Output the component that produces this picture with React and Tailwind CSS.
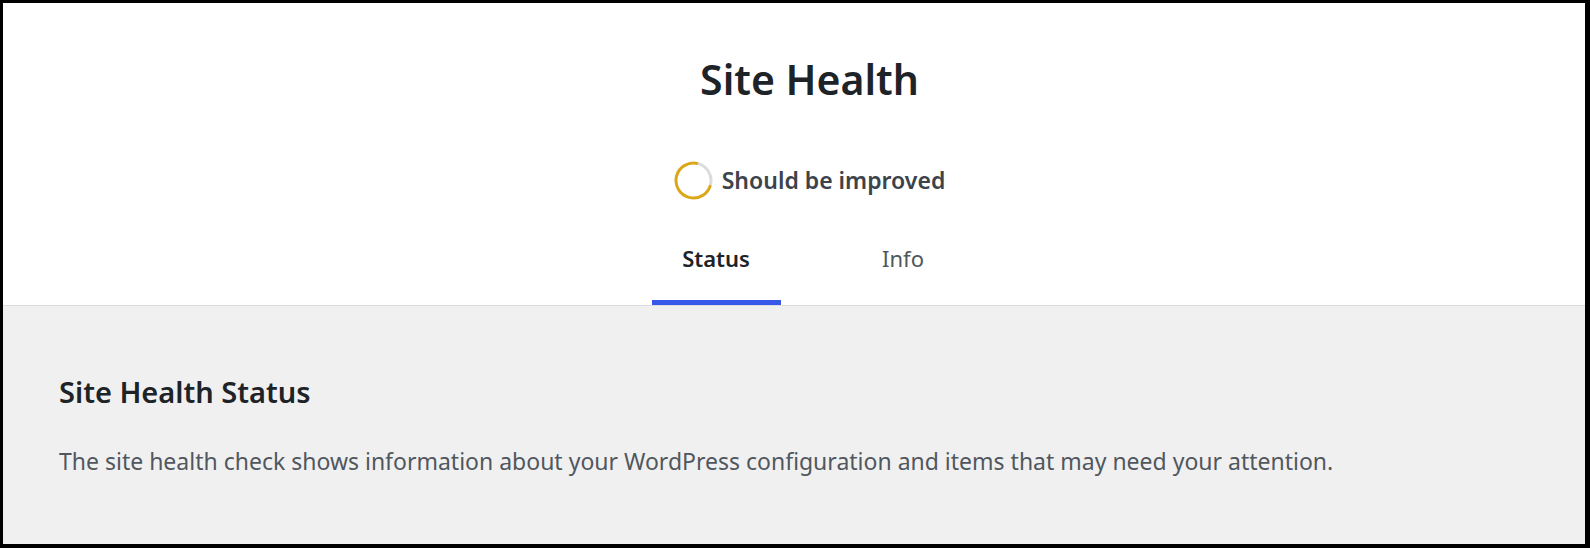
import React, { useState } from "react";

const FONT = { fontFamily: '"Noto Sans", "Open Sans", sans-serif' };

function ProgressRing() {
  return (
    <svg width="39" height="39" viewBox="0 0 39 39" className="shrink-0">
      <path
        d="M24.03 2.6 A17.5 17.5 0 0 1 36.4 24.03"
        fill="none"
        stroke="#dcdcde"
        strokeWidth="3"
      />
      <path
        d="M36.4 24.03 A17.5 17.5 0 1 1 24.03 2.6"
        fill="none"
        stroke="#dba617"
        strokeWidth="3"
      />
    </svg>
  );
}

export default function App() {
  const [tab, setTab] = useState("status");

  return (
    <div
      className="w-[1590px] h-[548px] border-black border-t-[3px] border-l-[3px] border-r-[5px] border-b-[4px] bg-[#f0f0f1] flex flex-col overflow-hidden"
      style={FONT}
    >
      <header className="bg-white border-b border-[#dcdcde] pl-[31px] pt-[48px] flex flex-col items-center">
        <h1 className="text-[41px] leading-[56px] font-semibold text-[#1d2327]">
          Site Health
        </h1>
        <div className="mt-[54px] flex items-center gap-[9px]">
          <ProgressRing />
          <span className="text-[23px] leading-[31px] font-semibold text-[#3c434a]">
            Should be improved
          </span>
        </div>
        <nav className="mt-[43px] flex gap-[58px]">
          <button
            onClick={() => setTab("status")}
            className={
              tab === "status"
                ? "w-[129px] text-center text-[22px] leading-[30px] pb-[27px] font-semibold text-[#1d2327] border-b-[5px] border-[#3858e9]"
                : "w-[129px] text-center text-[22px] leading-[30px] pb-[27px] text-[#50575e] border-b-[5px] border-transparent"
            }
          >
            Status
          </button>
          <button
            onClick={() => setTab("info")}
            className={
              tab === "info"
                ? "w-[129px] text-center text-[22px] leading-[30px] pb-[27px] font-semibold text-[#1d2327] border-b-[5px] border-[#3858e9]"
                : "w-[129px] text-center text-[22px] leading-[30px] pb-[27px] text-[#50575e] border-b-[5px] border-transparent"
            }
          >
            Info
          </button>
        </nav>
      </header>
      <section className="pl-[56px] pt-[66px]">
        <h2 className="text-[29px] leading-[40px] font-semibold text-[#1d2327]">
          Site Health Status
        </h2>
        <p className="mt-[34px] text-[23px] leading-[31px] text-[#50575e]">
          The site health check shows information about your WordPress
          configuration and items that may need your attention.
        </p>
      </section>
    </div>
  );
}
